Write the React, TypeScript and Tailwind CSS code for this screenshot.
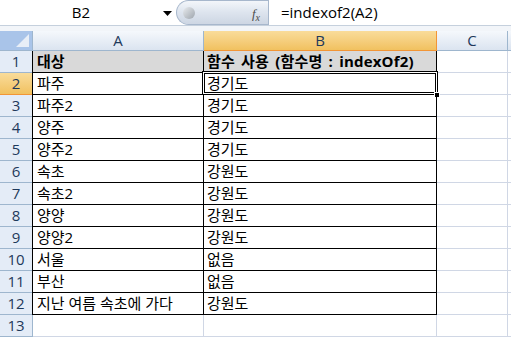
import React from "react";

const rows: [string, string][] = [
  ["대상", "함수 사용 (함수명 : indexOf2)"],
  ["파주", "경기도"],
  ["파주2", "경기도"],
  ["양주", "경기도"],
  ["양주2", "경기도"],
  ["속초", "강원도"],
  ["속초2", "강원도"],
  ["양양", "강원도"],
  ["양양2", "강원도"],
  ["서울", "없음"],
  ["부산", "없음"],
  ["지난 여름 속초에 가다", "강원도"],
  ["", ""],
];

const font = { fontFamily: '"Open Sans", "Noto Sans CJK KR", sans-serif' };

export default function App() {
  return (
    <div className="w-[511px] h-[339px] overflow-hidden bg-white relative" style={font}>
      {/* formula bar */}
      <div className="flex h-[26px] bg-white border-b border-[#c5d0dd]">
        <div className="relative w-[176px] flex items-center justify-center text-[15px] text-black">
          <span className="ml-[-14px]">B2</span>
          <svg className="absolute left-[163px] top-[11px]" width="9" height="5" viewBox="0 0 9 5">
            <path d="M0 0 H9 L4.5 5 Z" fill="#000" />
          </svg>
        </div>
        <div className="relative w-[92px] h-[25px] rounded-l-full border border-r-0 border-[#a7b7cc] bg-gradient-to-b from-[#f3f6fa] via-[#dde4ee] to-[#cdd6e3] flex items-center">
          <div className="ml-[6px] w-[12px] h-[12px] rounded-full bg-gradient-to-br from-[#e9ecef] to-[#9ea5ad]" />
          <span className="absolute right-[8px] top-[3px] text-[13px] italic text-[#4a4a4a]" style={{ fontFamily: '"Liberation Serif", serif' }}>
            f<sub className="text-[10px]">x</sub>
          </span>
        </div>
        <div className="flex-1 border-l border-[#a7b7cc] flex items-center pl-[12px] text-[15px] text-black">
          =indexof2(A2)
        </div>
      </div>
      <div className="h-[5px] bg-[#f2f5f9]" />
      {/* column headers */}
      <div className="flex h-[20px]">
        <div className="relative w-[33px] bg-[#a9c4e9] border-r border-b border-[#9eb6ce]">
          <svg className="absolute right-[3px] bottom-[3px]" width="13" height="13" viewBox="0 0 13 13">
            <path d="M13 0 V13 H0 Z" fill="#e8eef7" />
          </svg>
        </div>
        <div className="w-[171px] flex items-center justify-center text-[15px] text-[#1e395b] bg-gradient-to-b from-[#f5f8fc] to-[#dbe4f0] border-r border-b border-[#9eb6ce]">A</div>
        <div className="w-[233px] flex items-center justify-center text-[15px] text-[#1e395b] bg-gradient-to-b from-[#f9dc9a] to-[#f1c15f] border-r border-b border-[#f29536]">B</div>
        <div className="w-[71px] flex items-center justify-center text-[15px] text-[#1e395b] bg-gradient-to-b from-[#f5f8fc] to-[#dbe4f0] border-r border-b border-[#9eb6ce]">C</div>
        <div className="flex-1 bg-gradient-to-b from-[#f5f8fc] to-[#dbe4f0] border-b border-[#9eb6ce]" />
      </div>
      {rows.map((r, i) => {
        const n = i + 1;
        const isData = n <= 12;
        const isHead = n === 1;
        const sel = n === 2;
        const cellBorder = isData ? "border-black" : "border-[#d0d7e5]";
        return (
          <div key={i} className="flex h-[22px]">
            <div
              className={
                "w-[33px] flex items-center justify-center text-[15px] border-r border-b " +
                (sel
                  ? "bg-gradient-to-b from-[#f9dc9a] to-[#f1c15f] text-[#1e395b] border-[#f29536]"
                  : "bg-[#e4ecf7] text-[#1e395b] border-[#9eb6ce]")
              }
            >
              {n}
            </div>
            <div
              className={
                "w-[171px] flex items-center pl-[4px] text-[15px] text-black border-r border-b whitespace-nowrap overflow-hidden " +
                cellBorder +
                (isData ? " border-l border-l-black ml-[-1px] w-[172px]" : "") +
                (isHead ? " bg-[#d9d9d9] font-bold" : "")
              }
            >
              {r[0]}
            </div>
            <div
              className={
                "relative w-[233px] flex items-center pl-[3px] text-[15px] text-black border-r border-b whitespace-nowrap " +
                cellBorder +
                (isHead ? " bg-[#d9d9d9] font-bold [word-spacing:2px] tracking-[0.2px]" : "")
              }
            >
              {r[1]}
              {sel && (
                <>
                  <div className="absolute -left-[2px] -top-[2px] right-[-2px] bottom-[-1px] border border-black pointer-events-none" />
                  <div className="absolute -left-px -top-px right-[-1px] bottom-0 border border-white pointer-events-none" />
                  <div className="absolute left-0 top-0 right-0 bottom-px border border-black pointer-events-none" />
                  <div className="absolute right-[-4px] bottom-[-4px] w-[6px] h-[6px] bg-black border border-white" />
                </>
              )}
            </div>
            <div className="w-[71px] border-r border-b border-[#d0d7e5]" />
            <div className="flex-1 border-b border-[#d0d7e5]" />
          </div>
        );
      })}
    </div>
  );
}
